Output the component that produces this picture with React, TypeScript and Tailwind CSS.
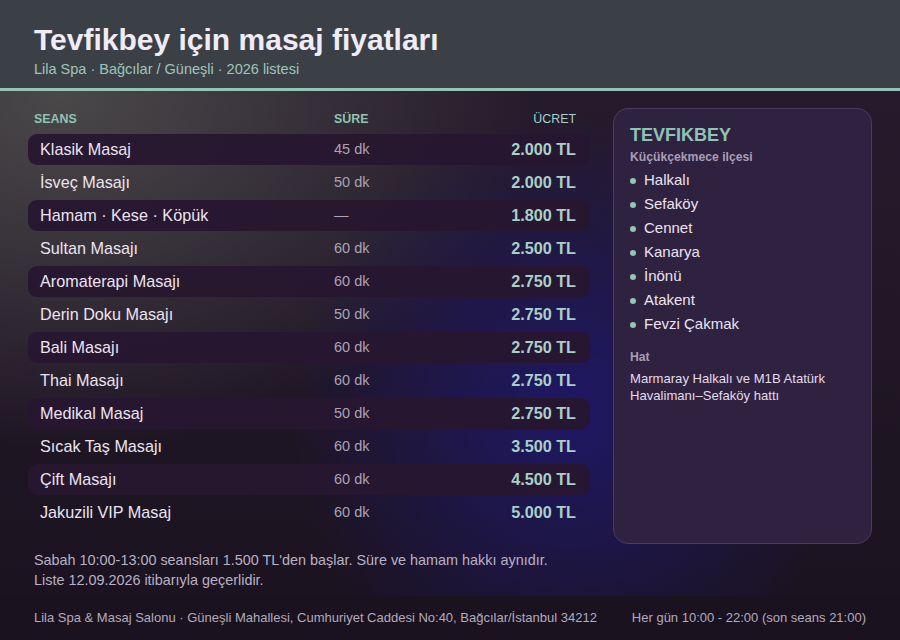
const ROWS = [
  { name: "Klasik Masaj", dur: "45 dk", price: "2.000 TL" },
  { name: "İsveç Masajı", dur: "50 dk", price: "2.000 TL" },
  { name: "Hamam · Kese · Köpük", dur: "—", price: "1.800 TL" },
  { name: "Sultan Masajı", dur: "60 dk", price: "2.500 TL" },
  { name: "Aromaterapi Masajı", dur: "60 dk", price: "2.750 TL" },
  { name: "Derin Doku Masajı", dur: "50 dk", price: "2.750 TL" },
  { name: "Bali Masajı", dur: "60 dk", price: "2.750 TL" },
  { name: "Thai Masajı", dur: "60 dk", price: "2.750 TL" },
  { name: "Medikal Masaj", dur: "50 dk", price: "2.750 TL" },
  { name: "Sıcak Taş Masajı", dur: "60 dk", price: "3.500 TL" },
  { name: "Çift Masajı", dur: "60 dk", price: "4.500 TL" },
  { name: "Jakuzili VIP Masaj", dur: "60 dk", price: "5.000 TL" },
];

const AREAS = ["Halkalı", "Sefaköy", "Cennet", "Kanarya", "İnönü", "Atakent", "Fevzi Çakmak"];

export default function App() {
  return (
    <div className="w-[900px] h-[640px] flex flex-col overflow-hidden font-[family-name:Liberation_Sans,Arial,sans-serif] bg-[#1c1420]">
      {/* Başlık */}
      <header className="h-[91px] shrink-0 bg-[#3b4047] border-b-[3px] border-[#93c4b5] px-[34px] pt-[23px]">
        <h1 className="text-[30px] leading-[34px] font-bold text-[#f0ecf5]">Tevfikbey için masaj fiyatları</h1>
        <p className="text-[14.5px] leading-[18px] mt-[3px] text-[#9ec5ba]">Lila Spa · Bağcılar / Güneşli · 2026 listesi</p>
      </header>

      {/* Gövde */}
      <main className="flex-1 flex flex-col px-[28px] pt-[17px] bg-[image:radial-gradient(ellipse_280px_300px_at_570px_320px,rgba(30,24,112,0.85),transparent_100%),radial-gradient(ellipse_560px_420px_at_60px_0px,#4a4849,transparent_85%),linear-gradient(to_bottom,#261b2c,#1b1320)]">
        <div className="flex gap-[23px]">
          {/* Fiyat tablosu */}
          <div className="w-[562px] shrink-0 pt-[2px]">
            <div className="flex items-center h-[18px] pl-[6px] pr-[14px] text-[12.4px] font-bold uppercase text-[#8fc3b5]">
              <span className="w-[300px]">Seans</span>
              <span className="flex-1">Süre</span>
              <span className="text-right font-normal text-[#a8d0c6]">Ücret</span>
            </div>
            <div className="mt-[6px] flex flex-col gap-[2px]">
              {ROWS.map((r, i) => (
                <div
                  key={r.name}
                  className={`flex items-center h-[31px] pl-[12px] pr-[14px] rounded-[9px] ${i % 2 === 0 ? "bg-[#27162f]/95" : ""}`}
                >
                  <span className="w-[294px] text-[16.2px] text-[#ebe4f0]">{r.name}</span>
                  <span className="flex-1 text-[14.5px] text-[#aba3b3]">{r.dur}</span>
                  <span className="text-right text-[16.2px] font-bold text-[#a9d0c8]">{r.price}</span>
                </div>
              ))}
            </div>
          </div>

          {/* Semt kartı */}
          <aside className="w-[260px] h-[436px] rounded-[15px] bg-[#2f2140] border border-[#4b3c5e] px-[16px] pt-[15px]">
            <h2 className="text-[18px] leading-[22px] font-bold text-[#8fc3b5]">TEVFIKBEY</h2>
            <p className="text-[12.2px] leading-[16px] font-bold text-[#a99db5] mt-[3px]">Küçükçekmece ilçesi</p>
            <ul className="mt-[3px]">
              {AREAS.map((a) => (
                <li key={a} className="flex items-center h-[24px] text-[15px] text-[#ebe4f0]">
                  <span className="w-[6px] h-[6px] rounded-full bg-[#93c4b5] mr-[8px] mt-[2px]" />
                  {a}
                </li>
              ))}
            </ul>
            <p className="text-[12.2px] font-bold text-[#a99db5] mt-[12px]">Hat</p>
            <p className="text-[13.1px] leading-[17px] text-[#e3dcea] mt-[4px]">
              Marmaray Halkalı ve M1B Atatürk Havalimanı–Sefaköy hattı
            </p>
          </aside>
        </div>

        <div className="mt-[6px] pl-[6px] text-[14.4px] leading-[20px] text-[#b9b1c4]">
          <p>Sabah 10:00-13:00 seansları 1.500 TL'den başlar. Süre ve hamam hakkı aynıdır.</p>
          <p>Liste 12.09.2026 itibarıyla geçerlidir.</p>
        </div>
      </main>

      {/* Alt bilgi */}
      <footer className="h-[44px] shrink-0 bg-[#1a121e] flex items-center justify-between px-[34px] text-[13px] text-[#b3abbe]">
        <span>Lila Spa &amp; Masaj Salonu · Güneşli Mahallesi, Cumhuriyet Caddesi No:40, Bağcılar/İstanbul 34212</span>
        <span>Her gün 10:00 - 22:00 (son seans 21:00)</span>
      </footer>
    </div>
  );
}
